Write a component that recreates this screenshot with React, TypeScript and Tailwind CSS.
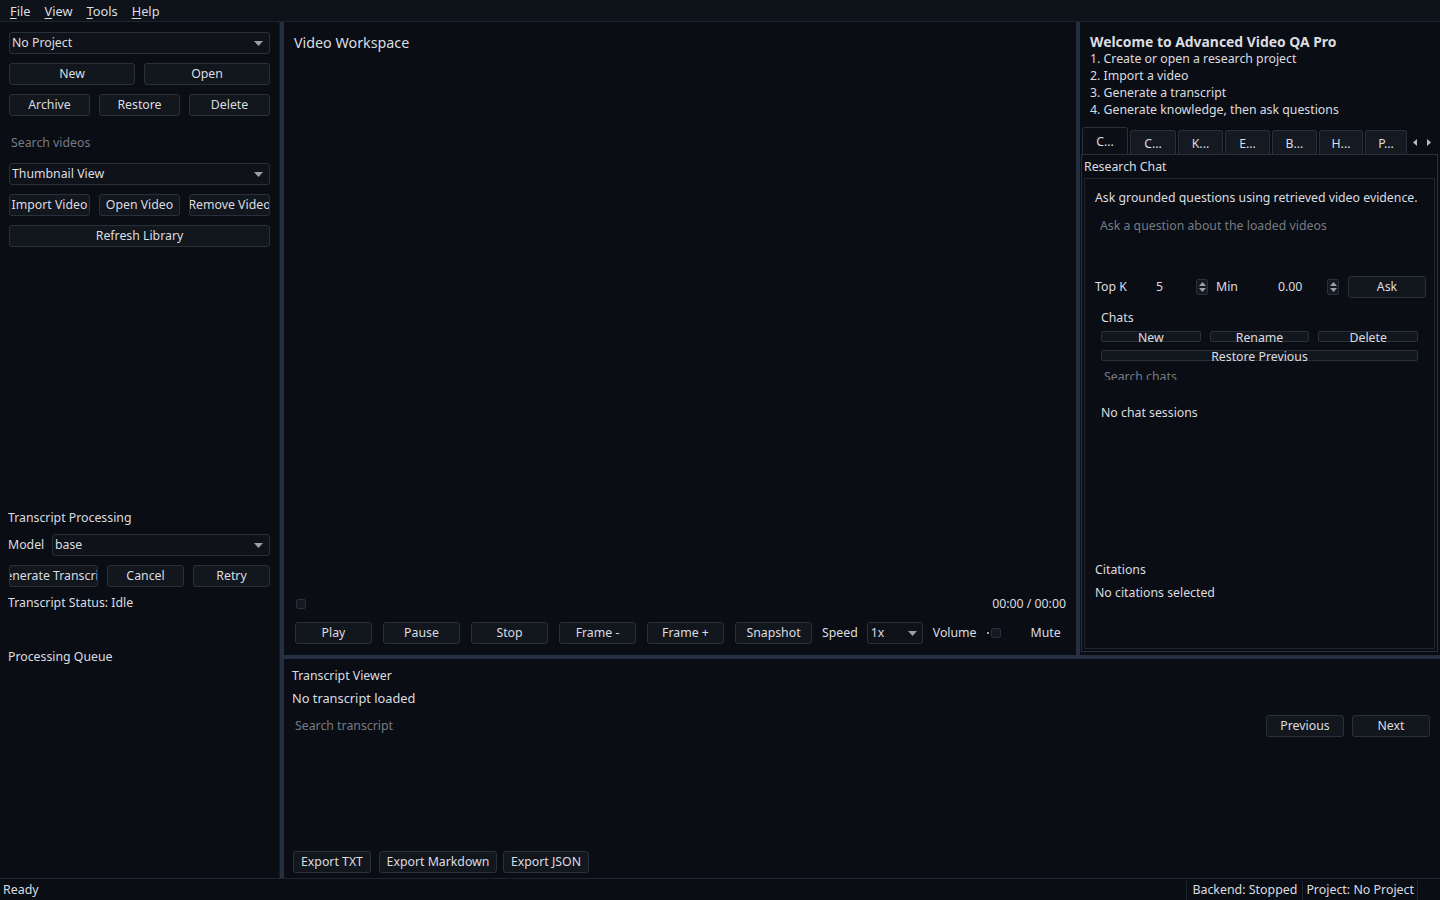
import React from "react";

const font = { fontFamily: '"Noto Sans", "Open Sans", sans-serif' };

type BtnProps = { label: string; className?: string };

const Btn = ({ label, className = "" }: BtnProps) => (
  <div
    className={`flex h-[22px] items-center justify-center overflow-hidden whitespace-nowrap rounded-[3px] border border-[#2a3039] bg-[#12161d] text-[12.3px] text-[#dcdde0] ${className}`}
  >
    {label}
  </div>
);

const Caret = () => (
  <svg width="9" height="5" viewBox="0 0 9 5" className="shrink-0">
    <path d="M0 0 L9 0 L4.5 5 Z" fill="#9aa0a8" />
  </svg>
);

const Combo = ({ value, className = "" }: { value: string; className?: string }) => (
  <div
    className={`flex h-[22px] items-center justify-between rounded-[3px] border border-[#2a3039] bg-[#0f1319] pl-[2px] pr-[6px] text-[12.3px] text-[#dcdde0] ${className}`}
  >
    <span>{value}</span>
    <Caret />
  </div>
);

const Spin = () => (
  <div className="flex h-[16px] w-[12px] flex-col items-center justify-center gap-[2px] rounded-[2px] border border-[#2a3039] bg-[#151a22]">
    <svg width="7" height="4" viewBox="0 0 7 4">
      <path d="M0 4 L7 4 L3.5 0 Z" fill="#9aa0a8" />
    </svg>
    <svg width="7" height="4" viewBox="0 0 7 4">
      <path d="M0 0 L7 0 L3.5 4 Z" fill="#9aa0a8" />
    </svg>
  </div>
);

const Menu = ({ label }: { label: string }) => (
  <span className="text-[12.8px] text-[#dcdde0]">
    <span className="underline underline-offset-2">{label[0]}</span>
    {label.slice(1)}
  </span>
);

const LeftPanel = () => (
  <div className="flex w-[280px] shrink-0 flex-col border-r border-[#161b23] px-[9px] text-[12.3px] text-[#dcdde0]">
    <Combo value="No Project" className="mt-[10px]" />
    <div className="mt-[9px] flex gap-[9px]">
      <Btn label="New" className="flex-1" />
      <Btn label="Open" className="flex-1" />
    </div>
    <div className="mt-[9px] flex gap-[9px]">
      <Btn label="Archive" className="flex-1" />
      <Btn label="Restore" className="flex-1" />
      <Btn label="Delete" className="flex-1" />
    </div>
    <div className="mt-[17px] flex h-[20px] items-center pl-[2px] text-[#767b83]">Search videos</div>
    <Combo value="Thumbnail View" className="mt-[10px]" />
    <div className="mt-[9px] flex gap-[9px]">
      <Btn label="Import Video" className="flex-1" />
      <Btn label="Open Video" className="flex-1" />
      <Btn label="Remove Video" className="flex-1" />
    </div>
    <Btn label="Refresh Library" className="mt-[9px]" />

    <div className="-ml-[1px] mt-[262px] leading-[17px]">Transcript Processing</div>
    <div className="mt-[8px] flex items-center gap-[6px]">
      <span className="-ml-[1px] w-[38px]">Model</span>
      <Combo value="base" className="flex-1" />
    </div>
    <div className="mt-[9px] flex gap-[9px]">
      <Btn label="Generate Transcript" className="w-[89px]" />
      <Btn label="Cancel" className="w-[77px]" />
      <Btn label="Retry" className="flex-1" />
    </div>
    <div className="-ml-[1px] mt-[7px] leading-[17px]">Transcript Status: Idle</div>
    <div className="-ml-[1px] mt-[37px] leading-[17px]">Processing Queue</div>
  </div>
);

const VideoWorkspace = () => (
  <div className="flex w-[792px] shrink-0 flex-col px-[10px] text-[12.3px] text-[#dcdde0]">
    <div className="mt-[11px] text-[14.3px] leading-[20px]">Video Workspace</div>
    <div className="flex-1" />
    <div className="flex items-center justify-between pl-[2px] pr-[0px]">
      <div className="h-[10px] w-[10px] rounded-[2px] border border-[#2a3039] bg-[#151a22]" />
      <span>00:00 / 00:00</span>
    </div>
    <div className="mb-[11px] mt-[9px] flex items-center pl-[1px]">
      <div className="flex gap-[11px]">
        {["Play", "Pause", "Stop", "Frame -", "Frame +", "Snapshot"].map((b) => (
          <Btn key={b} label={b} className="w-[77px]" />
        ))}
      </div>
      <span className="ml-[10px]">Speed</span>
      <div className="ml-[9px] flex h-[22px] w-[56px] items-center justify-between rounded-[3px] border border-[#2a3039] bg-[#0f1319] pl-[3px] pr-[5px]">
        <span>1x</span>
        <Caret />
      </div>
      <span className="ml-[10px]">Volume</span>
      <div className="ml-[10px] flex items-center">
        <div className="h-[2px] w-[2px] bg-[#9aa0a8]" />
        <div className="ml-[2px] h-[10px] w-[10px] rounded-[2px] border border-[#2a3039] bg-[#151a22]" />
      </div>
      <span className="ml-[30px]">Mute</span>
    </div>
  </div>
);

const tabs = ["C...", "C...", "K...", "E...", "B...", "H...", "P..."];
const tabWidths = ["w-[46px]", "w-[46px]", "w-[45px]", "w-[45px]", "w-[45px]", "w-[44px]", "w-[42px]"];

const RightPanel = () => (
  <div className="flex w-[360px] shrink-0 flex-col text-[12.3px] text-[#dcdde0]">
    <div className="ml-[10px] mt-[11px] leading-[17px]">
      <div className="text-[13.9px] font-bold">Welcome to Advanced Video QA Pro</div>
      <div>1. Create or open a research project</div>
      <div>2. Import a video</div>
      <div>3. Generate a transcript</div>
      <div>4. Generate knowledge, then ask questions</div>
    </div>

    {/* tab strip */}
    <div className="ml-[2px] mt-[9px] flex items-end">
      {tabs.map((t, i) => (
        <div
          key={i}
          className={`${tabWidths[i]} mr-[2px] flex items-center justify-center rounded-t-[3px] border border-b-0 border-[#2a3039] pt-[3px] ${
            i === 0 ? "h-[27px] bg-[#0c1016]" : "h-[24px] bg-[#141922]"
          }`}
        >
          {t}
        </div>
      ))}
      <div className="ml-[2px] flex h-[24px] items-center gap-[10px] bg-[#0a0d13] pl-[2px]">
        <svg width="4" height="7" viewBox="0 0 4 7">
          <path d="M4 0 L4 7 L0 3.5 Z" fill="#b8bcc2" />
        </svg>
        <svg width="4" height="7" viewBox="0 0 4 7">
          <path d="M0 0 L0 7 L4 3.5 Z" fill="#b8bcc2" />
        </svg>
      </div>
    </div>

    {/* tab pane */}
    <div className="mb-[3px] ml-[1px] mr-[2px] flex flex-1 flex-col border border-[#2a3039] bg-[#0a0d13]">
      <div className="ml-[2px] mt-[3px] leading-[17px]">Research Chat</div>
      <div className="mx-[2px] mb-[2px] mt-[3px] flex flex-1 flex-col border border-[#1f252e] pl-[10px] pr-[8px]">
        <div className="mt-[10px] whitespace-nowrap leading-[17px]">
          Ask grounded questions using retrieved video evidence.
        </div>
        <div className="ml-[5px] mt-[11px] leading-[17px] text-[#767b83]">Ask a question about the loaded videos</div>
        <div className="mt-[42px] flex h-[22px] items-center">
          <span className="w-[61px]">Top K</span>
          <span className="w-[40px]">5</span>
          <Spin />
          <span className="ml-[8px] w-[62px]">Min</span>
          <span className="w-[49px]">0.00</span>
          <Spin />
          <Btn label="Ask" className="ml-[9px] w-[78px]" />
        </div>
        <div className="ml-[6px] mt-[11px] leading-[17px]">Chats</div>
        <div className="ml-[6px] mr-[8px] mt-[5px] flex gap-[9px]">
          {["New", "Rename", "Delete"].map((b) => (
            <div
              key={b}
              className="flex h-[11px] flex-1 items-center justify-center rounded-[2px] border border-[#2a3039] bg-[#12161d] pt-[3px] leading-none"
            >
              {b}
            </div>
          ))}
        </div>
        <div className="ml-[6px] mr-[8px] mt-[8px] flex h-[11px] items-center justify-center rounded-[2px] border border-[#2a3039] bg-[#12161d] pt-[3px] leading-none">
          Restore Previous
        </div>
        <div className="ml-[9px] mt-[7px] h-[12px] overflow-hidden leading-[17px] text-[#767b83]">Search chats</div>
        <div className="ml-[6px] mt-[24px] leading-[17px]">No chat sessions</div>
        <div className="flex-1" />
        <div className="leading-[17px]">Citations</div>
        <div className="mt-[6px] leading-[17px]">No citations selected</div>
        <div className="h-[47px]" />
      </div>
    </div>
  </div>
);

const TranscriptViewer = () => (
  <div className="flex flex-1 flex-col px-[8px] text-[12.3px] text-[#dcdde0]">
    <div className="mt-[8px] leading-[17px]">Transcript Viewer</div>
    <div className="mt-[6px] text-[12.8px] leading-[17px]">No transcript loaded</div>
    <div className="mt-[8px] flex items-center">
      <span className="ml-[3px] flex-1 text-[#767b83]">Search transcript</span>
      <Btn label="Previous" className="w-[78px]" />
      <Btn label="Next" className="ml-[8px] mr-[2px] w-[78px]" />
    </div>
    <div className="flex-1" />
    <div className="mb-[5px] flex pl-[1px]">
      <Btn label="Export TXT" className="w-[78px]" />
      <Btn label="Export Markdown" className="ml-[8px] w-[118px]" />
      <Btn label="Export JSON" className="ml-[6px] w-[86px]" />
    </div>
  </div>
);

export default function App() {
  return (
    <div className="flex h-[900px] w-[1440px] flex-col overflow-hidden bg-[#0a0d13]" style={font}>
      {/* menu bar */}
      <div className="flex h-[22px] shrink-0 items-center gap-[14px] border-b border-[#1e2530] bg-[#0e1219] pl-[10px] pt-[2px]">
        <Menu label="File" />
        <Menu label="View" />
        <Menu label="Tools" />
        <Menu label="Help" />
      </div>

      <div className="flex flex-1 overflow-hidden">
        <LeftPanel />
        <div className="w-[4px] shrink-0 bg-[#233042]" />
        <div className="flex flex-1 flex-col">
          <div className="flex h-[633px] shrink-0">
            <VideoWorkspace />
            <div className="w-[4px] shrink-0 bg-[#233042]" />
            <RightPanel />
          </div>
          <div className="h-[4px] shrink-0 bg-[#233042]" />
          <TranscriptViewer />
        </div>
      </div>

      {/* status bar */}
      <div className="flex h-[22px] shrink-0 items-center border-t border-[#1e2530] bg-[#0a0d13] pt-[2px] text-[12.4px] text-[#dcdde0]">
        <span className="ml-[3px] flex-1">Ready</span>
        <span className="border-l border-[#1e2530] px-[5px]">Backend: Stopped</span>
        <span className="mr-[22px] border-x border-[#1e2530] px-[3px]">Project: No Project</span>
      </div>
    </div>
  );
}
